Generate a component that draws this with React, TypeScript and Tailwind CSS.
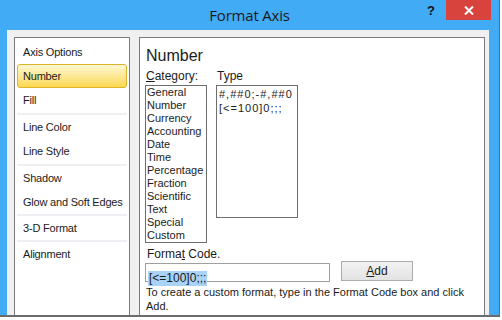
import React from 'react';

const navGroups: string[][] = [
    ['Axis Options', 'Number', 'Fill'],
    ['Line Color', 'Line Style'],
    ['Shadow', 'Glow and Soft Edges'],
    ['3-D Format'],
    ['Alignment'],
];

const categories = ['General', 'Number', 'Currency', 'Accounting', 'Date', 'Time', 'Percentage', 'Fraction', 'Scientific', 'Text', 'Special', 'Custom'];

const sepHeights = ['h-[3px]', 'h-[3px]', 'h-[2px]', 'h-[2px]'];

export default function App() {
    const selected = 'Number';
    return (
        <div className="w-[502px] h-[320px] bg-white overflow-hidden font-['Liberation_Sans',Arial,sans-serif] text-[#1b1b1b]">
            <div className="w-[500px] h-[317px] bg-[#41abf5] border-r border-b-2 border-[#6b6b6b]">
                {/* title bar */}
                <div className="grid grid-cols-[1fr_auto_1fr] h-[30px]">
                    <div></div>
                    <div className="font-['Open_Sans',sans-serif] text-[15px] leading-[30px] text-[#1a1a1a] tracking-[-0.2px]">Format Axis</div>
                    <div className="flex justify-end items-start">
                        <span className="mt-[4px] mr-[11px] text-[13px] font-bold leading-[14px] text-[#111]">?</span>
                        <button className="w-[45px] h-[20px] mr-[8px] bg-[#d8433d] flex items-center justify-center">
                            <svg width="10" height="9" viewBox="0 0 10 9">
                                <path d="M1 0.5 L9 8.5 M9 0.5 L1 8.5" stroke="#fff" strokeWidth="2" />
                            </svg>
                        </button>
                    </div>
                </div>

                {/* client area */}
                <div className="ml-[7px] w-[482px] h-[285px] bg-[#f0f0f0] pt-[7px] pl-[7px] flex gap-[9px]">
                    {/* left nav */}
                    <div className="w-[116px] h-full bg-white border border-b-0 border-[#7b7b7b] px-[2px] pt-[2px]">
                        {navGroups.map((group, gi) => (
                            <div key={gi}>
                                {group.map(item => (
                                    <div
                                        key={item}
                                        className={`h-[24px] pl-[5px] text-[11px] leading-[22px] tracking-[-0.2px] whitespace-nowrap border rounded-[3px] ${item === selected ? 'border-[#e1b22e] bg-gradient-to-b from-[#fff8cf] to-[#fcd84a]' : 'border-transparent'}`}
                                    >
                                        {item}
                                    </div>
                                ))}
                                {gi < navGroups.length - 1 && (
                                    <div className={`${sepHeights[gi]} flex items-center`}>
                                        <div className="w-full h-[2px] bg-[#eeeff2]"></div>
                                    </div>
                                )}
                            </div>
                        ))}
                    </div>

                    {/* right panel */}
                    <div className="w-[346px] h-full bg-white border border-b-0 border-[#7b7b7b] pl-[5px] pt-[7px]">
                        <div className="text-[16px] leading-[21px] pl-[1px]">Number</div>
                        <div className="flex gap-[9px] mt-[3px]">
                            <div className="w-[62px]">
                                <div className="text-[12px] leading-[14px] pl-[1px]"><span className="underline">C</span>ategory:</div>
                                <div className="mt-[2px] h-[158px] border border-[#6e6e6e] pl-[1px] text-[11px] leading-[13px]">
                                    {categories.map(c => (
                                        <div key={c}>{c}</div>
                                    ))}
                                </div>
                            </div>
                            <div className="w-[82px]">
                                <div className="text-[12px] leading-[14px] pl-[1px]">Type</div>
                                <div className="mt-[2px] h-[133px] border border-[#6e6e6e] pl-[2px] pt-[1px] text-[11px] leading-[14px] tracking-[1px]">
                                    <div>#,##0;-#,##0</div>
                                    <div>[&lt;=100]0;;;</div>
                                </div>
                            </div>
                        </div>

                        <div className="mt-[4px] text-[12px] leading-[14px] pl-[2px]">Forma<span className="underline">t</span> Code.</div>
                        <div className="flex items-start">
                            <div className="mt-[2px] w-[185px] h-[19px] border border-[#a0a0a0] bg-white pl-[2px] pt-[1px]">
                                <span className="bg-[#a9d3f6] text-[12px] leading-[15px] inline-block px-[1px]">[&lt;=100]0;;;</span>
                            </div>
                            <button className="ml-[11px] w-[72px] h-[20px] border border-[#acacac] bg-gradient-to-b from-[#f2f2f2] to-[#e3e3e3] text-[12px] leading-[18px]">
                                <span className="underline">A</span>dd
                            </button>
                        </div>
                        <div className="mt-[3px] pl-[1px] text-[11px] leading-[14px] whitespace-nowrap">
                            To create a custom format, type in the Format Code box and click<br />Add.
                        </div>
                    </div>
                </div>
            </div>
        </div>
    );
}
